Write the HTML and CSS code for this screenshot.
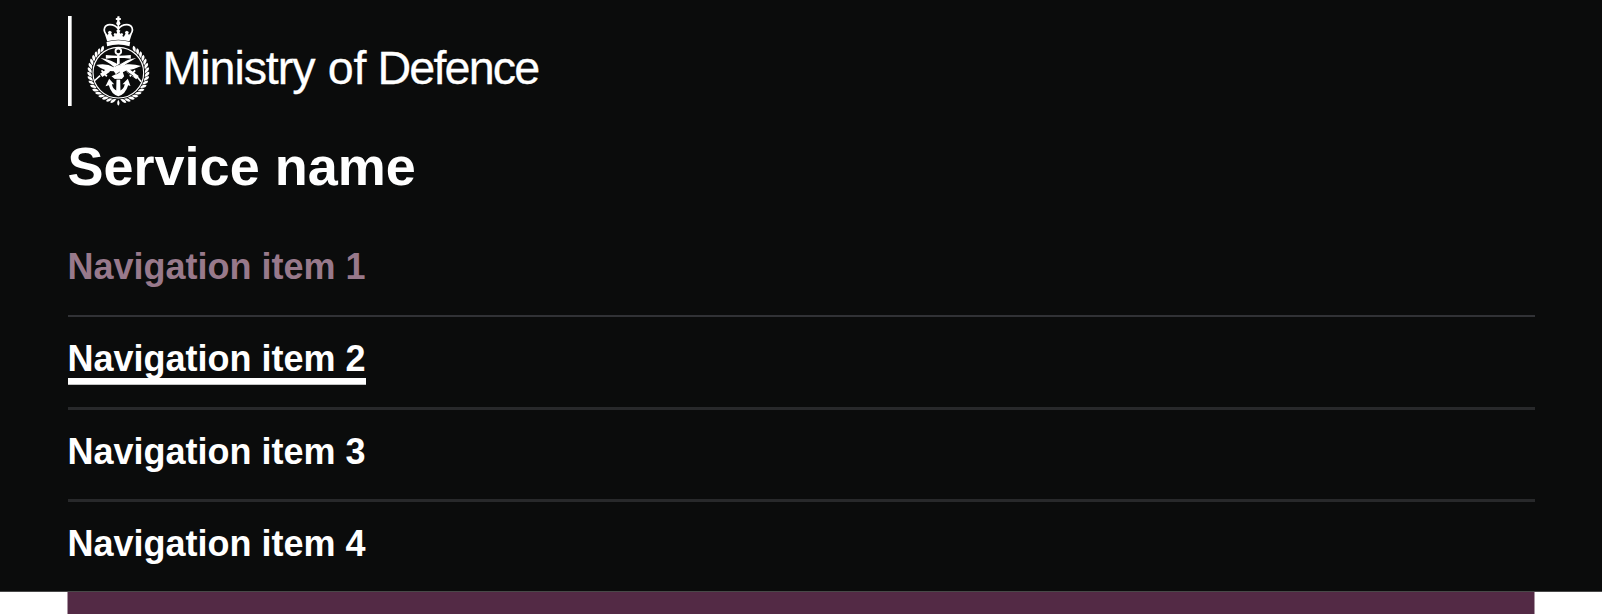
FILE: index.html
```html
<!DOCTYPE html>
<html lang="en">
<head>
<meta charset="utf-8">
<title>Service name</title>
<link rel="stylesheet" href="styles.css">
</head>
<body>
<header class="header">
  <a class="logo">
    <svg class="logo-art" viewBox="22.5 18 1440 270" role="img" aria-label="Ministry of Defence">
      <defs>
        <path id="leaf" d="M-10 -6Q-1 -10 7 6Q-7 8 -10 -6Z"/>
        <g id="branch">
          <use href="#leaf" transform="rotate(35) translate(0 -86)"/>
          <use href="#leaf" transform="rotate(43.5) translate(0 -86)"/>
          <use href="#leaf" transform="rotate(52) translate(0 -86)"/>
          <use href="#leaf" transform="rotate(60.5) translate(0 -86)"/>
          <use href="#leaf" transform="rotate(69) translate(0 -86)"/>
          <use href="#leaf" transform="rotate(77.5) translate(0 -86)"/>
          <use href="#leaf" transform="rotate(86) translate(0 -86)"/>
          <use href="#leaf" transform="rotate(94.500) translate(0 -86)"/>
          <use href="#leaf" transform="rotate(103) translate(0 -86)"/>
          <use href="#leaf" transform="rotate(111.5) translate(0 -86)"/>
          <use href="#leaf" transform="rotate(120) translate(0 -86)"/>
          <use href="#leaf" transform="rotate(128.5) translate(0 -86)"/>
          <use href="#leaf" transform="rotate(137) translate(0 -86)"/>
          <use href="#leaf" transform="rotate(145.5) translate(0 -86)"/>
          <use href="#leaf" transform="rotate(154) translate(0 -86)"/>
          <use href="#leaf" transform="rotate(162.5) translate(0 -86)"/>
          <use href="#leaf" transform="rotate(171) translate(0 -86)"/>
        </g>
      </defs>
      <path d="M22.5 18H33.500V288H22.5Z"/>
      <g transform="translate(173.5 188)">
        <circle r="76" class="line" stroke-width="3.5"/>
        <use href="#branch"/>
        <use href="#branch" transform="scale(-1 1)"/>
        <path d="M0 81Q7 91 0 99Q-7 91 0 81Z"/>
      </g>
      <path class="gap" d="M135 94H212L209 110Q173 100 138 110Z"/>
      <!-- crown -->
      <path d="M171 19H177V24H181V30H177V36H170V30H166V24H170Z"/>
      <circle cx="173.500" cy="40" r="6"/>
      <path class="line" stroke-width="5" d="M140 77C123 59 134 44 148 44C160 44 168 49 173.500 57C179 49 187 44 199 44C213 44 224 59 207 77M173.500 42V72"/>
      <path d="M133 72L141 76L144 71L142 66L148 62L154 66L152 71L157 80L162 78L159 74L162 69L168 71L170 67L167 62L173.500 58L180 62L177 67L179 71L185 69L188 74L185 78L190 80L195 71L193 66L199 62L205 66L203 71L206 76L214 72L207 94Q173.500 84 140 94Z"/>
      <path d="M138 96Q173.500 86 209 96L207 109Q173.500 98 140 109Z"/>
      <!-- anchor, swords and eagle -->
      <circle class="line" stroke-width="5.5" cx="173.500" cy="124" r="8.500"/>
      <path d="M170 132H177L180 245L173.500 259L167 245ZM136 135Q173 139 211 135V146Q173 141 136 146Z"/>
      <path d="M146 206L161 223H154Q158 239 169 242L173.500 247L178 242Q189 239 193 223H186L202 206L210 228L203 226Q195 253 173.500 259Q152 253 145 226L135 229Z"/>
      <path d="M120 144Q151 148 184 170L175 182Q151 161 120 144ZM227 144Q196 148 164 170L174 180Q196 160 227 144Z"/>
      <path class="line" stroke-width="12" d="M145 180L122 196M200 180L231 203"/>
      <path class="line" stroke-width="5" d="M123 181L139 199M224 181L208 199M119 197L101 213M228 198L242 215"/>
      <path class="line gap-line" stroke-width="2.5" d="M162 172L198 150M184 174L219 199"/>
      <path d="M107 165Q137 158 160 172L171 166L185 168L198 163Q220 161 242 168Q221 179 196 182L187 187L191 199L184 207H163L153 199L166 193L160 184Q131 184 107 165Z"/>
      <path class="line gap-line" stroke-width="2" d="M165 208H183M168 192L178 186"/>
      <g class="title" aria-hidden="true">
        <text x="306" y="223" textLength="459">Ministry</text>
        <text x="802" y="223" textLength="116">of</text>
        <text x="951" y="223" textLength="488">Defence</text>
      </g>
    </svg>
  </a>
  <div class="service">Service name</div>
  <nav>
    <ul class="nav-list">
      <li class="nav-item"><a class="nav-link nav-link-active">Navigation item 1</a></li>
      <li class="nav-item nav-item-wide"><a class="nav-link nav-link-hover">Navigation item 2</a></li>
      <li class="nav-item nav-item-wide"><a class="nav-link">Navigation item 3</a></li>
      <li class="nav-item"><a class="nav-link">Navigation item 4</a></li>
    </ul>
  </nav>
</header>
<div class="band"></div>
</body>
</html>
```
FILE: styles.css
```css
body {
  margin: 0;
  background: #fff;
  color: #fff;
  font-family: "Liberation Sans", Arial, sans-serif;
  overflow: hidden;
}
.header {
  box-sizing: border-box;
  height: 592px;
  padding: 16px 67.5px 0;
  border-bottom: 1px solid #484848;
  background: #0b0c0c;
}
.logo { display: block; height: 90px; }
.logo-art { display: block; width: 480px; height: 90px; fill: #fff; overflow: visible; }
.line { fill: none; stroke: #fff; }
.gap { fill: #0b0c0c; }
.gap-line { stroke: #0b0c0c; }
.title { font-size: 140px; stroke: #fff; stroke-width: 0.8px; }
.service {
  height: 119px;
  padding-top: 30px;
  box-sizing: border-box;
  font-size: 54px;
  line-height: 60px;
  font-weight: 700;
}
.nav-list { margin: 0; padding: 0; list-style: none; }
.nav-item {
  box-sizing: border-box;
  height: 92.25px;
  padding-top: 23px;
  border-bottom: 2px solid #313236;
}
.nav-item-wide { border-bottom: 3px solid #28292b; }
.nav-item:last-child { border-bottom: 0; }
.nav-link {
  display: inline-block;
  font-size: 36px;
  line-height: 38px;
  font-weight: 700;
}
.nav-link-active { color: #98798b; }
.nav-link-hover { box-shadow: 0 6.75px 0 #fff; }
.band {
  height: 30px;
  margin: 0 67px;
  border: solid #a995a2;
  border-width: 0 1px;
  background: #532a45;
}
```
